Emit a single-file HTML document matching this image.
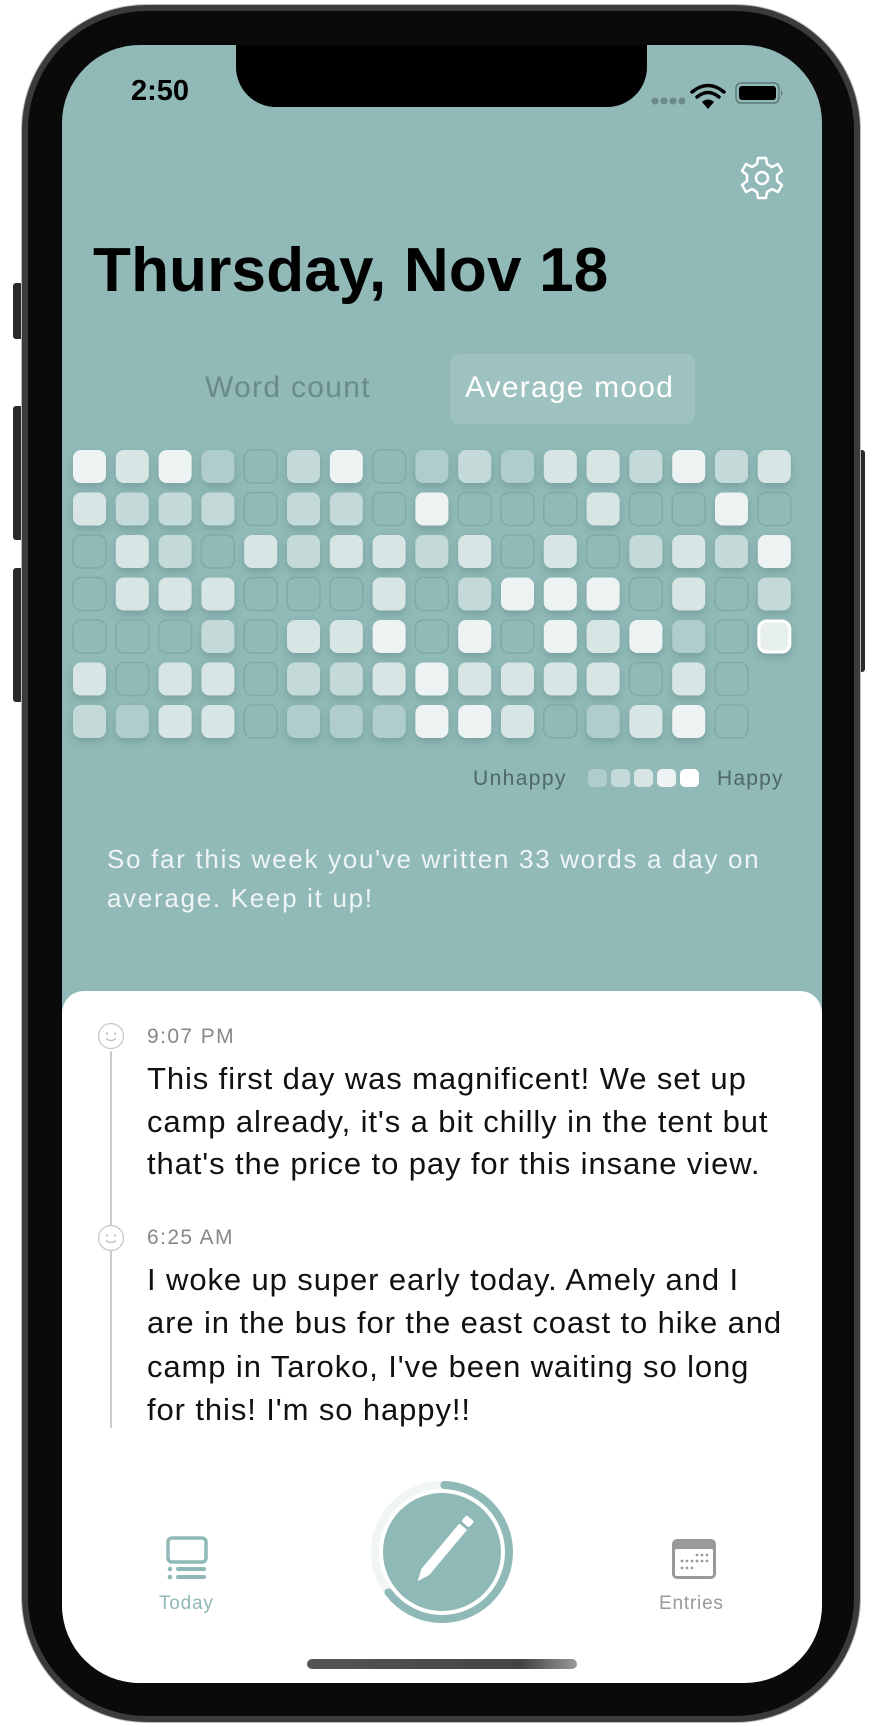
<!DOCTYPE html>
<html><head><meta charset="utf-8"><style>
*{margin:0;padding:0;box-sizing:border-box}
body{width:878px;height:1727px;background:#fff;position:relative;overflow:hidden;font-family:"Liberation Sans",sans-serif}
.abs{position:absolute}
.frame{left:22px;top:5px;width:838px;height:1717px;border-radius:125px;background:#0a0a0a;border:6px solid #3b3b3b;box-shadow:0 0 0 1px #bbb}
.btn{background:#2a2a2a;border-radius:3px}
.screen{left:62px;top:45px;width:760px;height:1638px;border-radius:78px;background:#90b9b7;overflow:hidden}
.notch{left:174px;top:-10px;width:411px;height:72px;background:#000;border-radius:0 0 40px 40px}
.card{left:0;top:946px;width:760px;height:760px;background:#fff;border-radius:22px 22px 0 0}
.t{position:absolute;white-space:nowrap}
</style></head><body>
<div class="abs btn" style="left:13px;top:283px;width:10px;height:56px"></div>
<div class="abs btn" style="left:13px;top:406px;width:10px;height:134px"></div>
<div class="abs btn" style="left:13px;top:568px;width:10px;height:134px"></div>
<div class="abs btn" style="left:856px;top:450px;width:9px;height:222px"></div>
<div class="abs frame"></div>
<div class="abs screen">
  <div class="abs notch"></div>
  <div class="t" style="left:69px;top:30px;font-size:29px;font-weight:bold;color:#000">2:50</div>
  <svg class="abs" style="left:588px;top:34px" width="140" height="36" viewBox="0 0 140 36">
    <g fill="#6d8b89"><circle cx="5" cy="22" r="3.5"/><circle cx="14" cy="22" r="3.5"/><circle cx="23" cy="22" r="3.5"/><circle cx="32" cy="22" r="3.5"/></g>
    <g fill="none" stroke="#000" stroke-width="3.5" stroke-linecap="round"><path d="M42 13 Q58 0 74 13"/><path d="M47 18 Q58 9 69 18"/></g>
    <path d="M52 23 Q58 18 64 23 L58 30 Z" fill="#000"/>
    <rect x="86" y="4" width="43" height="20" rx="5" fill="none" stroke="#5c7775" stroke-width="1.5"/>
    <rect x="89" y="7" width="37" height="14" rx="3" fill="#000"/>
    <path d="M131 11 q3 3 0 6" fill="#5c7775"/>
  </svg>
  <svg class="abs" style="left:676px;top:109px" width="48" height="48" viewBox="-24 -24 48 48">
    <path fill="none" stroke="#fff" stroke-width="2.5" stroke-linejoin="round" d="M-4,-20 L4,-20 L5,-14 L10,-11 L16,-14 L20,-7 L15,-3 L15,3 L20,7 L16,14 L10,11 L5,14 L4,20 L-4,20 L-5,14 L-10,11 L-16,14 L-20,7 L-15,3 L-15,-3 L-20,-7 L-16,-14 L-10,-11 L-5,-14 Z"/>
    <circle r="6" fill="none" stroke="#fff" stroke-width="2.5"/>
  </svg>
  <div class="t" style="left:31px;top:190px;font-size:62px;font-weight:bold;color:#000;letter-spacing:0.2px">Thursday, Nov 18</div>
  <div class="abs" style="left:388px;top:309px;width:245px;height:70px;border-radius:9px;background:rgba(255,255,255,.13)"></div>
  <div class="t" style="left:143px;top:326px;font-size:30px;color:#6a8b89;letter-spacing:1.3px">Word count</div>
  <div class="t" style="left:403px;top:326px;font-size:30px;color:#fff;letter-spacing:1.2px">Average mood</div>
  <svg class="abs" style="left:0;top:350px" width="760" height="360" viewBox="62 395 760 360">
    <defs><filter id="sh" x="-30%" y="-30%" width="160%" height="170%"><feDropShadow dx="0" dy="4" stdDeviation="4" flood-color="#3d6664" flood-opacity=".3"/></filter></defs>
    <g id="grid"></g>
  </svg>
  <div class="t" style="left:411px;top:722px;font-size:21px;color:#4e6866;letter-spacing:1.4px">Unhappy</div>
  <svg class="abs" style="left:526px;top:724px" width="114" height="19"><rect x="0" width="19" height="18" rx="5" fill="#aecdcb"/><rect x="23" width="19" height="18" rx="5" fill="#c3dad9"/><rect x="46" width="19" height="18" rx="5" fill="#d7e6e5"/><rect x="69" width="19" height="18" rx="5" fill="#ecf3f2"/><rect x="92" width="19" height="18" rx="5" fill="#fff"/></svg>
  <div class="t" style="left:655px;top:722px;font-size:21px;color:#4e6866;letter-spacing:1.2px">Happy</div>
  <div class="t" style="left:45px;top:795px;font-size:26px;line-height:39px;color:#eef5f4;letter-spacing:1.7px">So far this week you've written 33 words a day on<br>average. Keep it up!</div>
  <div class="abs card">
    <div class="abs" style="left:48px;top:60px;width:1.5px;height:377px;background:#ccc"></div>
    <svg class="abs" style="left:35px;top:31px" width="28" height="28" viewBox="0 0 28 28"><circle cx="14" cy="14" r="12.5" fill="#fff" stroke="#c8c8c8" stroke-width="1.3"/><circle cx="10" cy="11.5" r="1.1" fill="#bbb"/><circle cx="18" cy="11.5" r="1.1" fill="#bbb"/><path d="M9 16.5 q5 4 10 0" fill="none" stroke="#bbb" stroke-width="1.2"/></svg>
    <div class="t" style="left:85px;top:34px;font-size:21px;color:#888;letter-spacing:1.4px">9:07 PM</div>
    <div class="t" style="left:85px;top:67px;font-size:31px;line-height:42.5px;color:#111;letter-spacing:0.9px">This first day was magnificent! We set up<br>camp already, it's a bit chilly in the tent but<br>that's the price to pay for this insane view.</div>
    <svg class="abs" style="left:35px;top:233px" width="28" height="28" viewBox="0 0 28 28"><circle cx="14" cy="14" r="12.5" fill="#fff" stroke="#c8c8c8" stroke-width="1.3"/><circle cx="10" cy="11.5" r="1.1" fill="#bbb"/><circle cx="18" cy="11.5" r="1.1" fill="#bbb"/><path d="M9 16.5 q5 4 10 0" fill="none" stroke="#bbb" stroke-width="1.2"/></svg>
    <div class="t" style="left:85px;top:235px;font-size:21px;color:#888;letter-spacing:1.4px">6:25 AM</div>
    <div class="t" style="left:85px;top:267px;font-size:31px;line-height:43.3px;color:#111;letter-spacing:0.9px">I woke up super early today. Amely and I<br>are in the bus for the east coast to hike and<br>camp in Taroko, I've been waiting so long<br>for this! I'm so happy!!</div>
  </div>
  <svg class="abs" style="left:100px;top:1490px" width="50" height="48" viewBox="0 0 50 48">
    <rect x="6" y="3" width="38" height="24" rx="4" fill="none" stroke="#8fb9b6" stroke-width="3.5"/>
    <circle cx="8" cy="34" r="2.3" fill="#8fb9b6"/><circle cx="8" cy="42" r="2.3" fill="#8fb9b6"/>
    <rect x="14" y="32" width="30" height="4" rx="2" fill="#8fb9b6"/><rect x="14" y="40" width="30" height="4" rx="2" fill="#8fb9b6"/>
  </svg>
  <div class="t" style="left:97px;top:1548px;font-size:19px;color:#8fb9b6;letter-spacing:0.8px">Today</div>
  <svg class="abs" style="left:608px;top:1492px" width="48" height="44" viewBox="0 0 48 44">
    <rect x="2" y="2" width="44" height="40" rx="5" fill="#999"/><rect x="5" y="12" width="38" height="27" rx="2" fill="#fff"/>
    <g fill="#999"><circle cx="27" cy="18" r="1.4"/><circle cx="32" cy="18" r="1.4"/><circle cx="37" cy="18" r="1.4"/>
    <circle cx="12" cy="24" r="1.4"/><circle cx="17" cy="24" r="1.4"/><circle cx="22" cy="24" r="1.4"/><circle cx="27" cy="24" r="1.4"/><circle cx="32" cy="24" r="1.4"/><circle cx="37" cy="24" r="1.4"/>
    <circle cx="12" cy="31" r="1.4"/><circle cx="17" cy="31" r="1.4"/><circle cx="22" cy="31" r="1.4"/></g>
  </svg>
  <div class="t" style="left:597px;top:1548px;font-size:19px;color:#999;letter-spacing:0.8px">Entries</div>
  <svg class="abs" style="left:300px;top:1427px" width="160" height="160" viewBox="-80 -80 160 160">
    <circle r="67" fill="none" stroke="#f1f5f5" stroke-width="8"/>
    <circle r="67" fill="none" stroke="#8fb9b6" stroke-width="8" stroke-linecap="round" stroke-dasharray="270 500" transform="rotate(-88)"/>
    <circle r="59" fill="#8fb9b6"/>
    <g transform="rotate(40)" fill="#fff"><rect x="-5" y="-44" width="10" height="8" rx="2"/><path d="M-5 -33 L5 -33 L5 26 L0 38 L-5 26 Z"/></g>
  </svg>
  <div class="abs" style="left:245px;top:1614px;width:270px;height:10px;border-radius:5px;background:linear-gradient(90deg,#555,#444 80%,#999)"></div>
</div>
<script>
var rows=[
"43410240121332423",
"32220220400030040",
"03203233230302324",
"03330003024440302",
"00020334040434105",
"3033022343333030",
"2133011144301340"];
var cols=["","#aecdcb","#c3dad9","#d7e6e5","#ecf3f2","#edf3f2"];
var g=document.getElementById('grid'),h='';
for(var r=0;r<7;r++){for(var c=0;c<rows[r].length;c++){var L=+rows[r][c];var x=73+c*42.8,y=450+r*42.5;
if(L==0)h+='<rect x="'+x+'" y="'+y+'" width="33" height="33" rx="8" fill="none" stroke="#82a8a6" stroke-width="1.5"/>';
else if(L==5)h+='<rect x="'+(x+1)+'" y="'+(y+1)+'" width="31" height="31" rx="8" fill="#e8f0ef" stroke="#fff" stroke-width="3" filter="url(#sh)"/>';
else h+='<rect x="'+x+'" y="'+y+'" width="33" height="33" rx="8" fill="'+cols[L]+'" filter="url(#sh)"/>';}}
g.innerHTML=h;
</script>
</body></html>
